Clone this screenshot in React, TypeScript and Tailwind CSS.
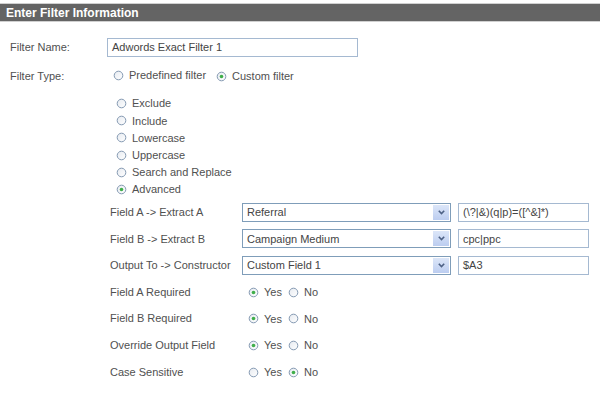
import { ReactNode } from "react";

const font = { fontFamily: '"Liberation Sans", Arial, sans-serif' };

function Radio({ checked, label }: { checked?: boolean; label: string }) {
  return (
    <span className="inline-flex items-center">
      <svg width="11" height="11" viewBox="0 0 11 11" className="mr-[5px] shrink-0">
        <defs>
          <linearGradient id="rg" x1="0" y1="0" x2="1" y2="1">
            <stop offset="0" stopColor="#e6eaf0" />
            <stop offset="1" stopColor="#ffffff" />
          </linearGradient>
        </defs>
        <circle cx="5.5" cy="5.5" r="4.3" fill="url(#rg)" stroke="#8499b2" strokeWidth="1" />
        {checked && <circle cx="5.5" cy="5.5" r="1.8" fill="#3fae49" />}
      </svg>
      <span>{label}</span>
    </span>
  );
}

function Select({ value }: { value: string }) {
  return (
    <div className="flex h-[19px] w-[209px] items-center border border-[#7f9db9] bg-white p-[1px]">
      <span className="flex-1 pl-[3px] text-[#444]">{value}</span>
      <span className="flex h-full w-[16px] items-center justify-center bg-gradient-to-b from-[#dce6f8] to-[#bccdf0]">
        <svg width="7" height="5" viewBox="0 0 7 5">
          <path d="M0.8 0.8 L3.5 3.6 L6.2 0.8" fill="none" stroke="#4d6185" strokeWidth="1.6" />
        </svg>
      </span>
    </div>
  );
}

function TextBox({ value, width }: { value: string; width: string }) {
  return (
    <div className={`flex h-[19px] items-center border border-[#a5b9d1] bg-white pl-[4px] text-[#444] ${width}`}>
      {value}
    </div>
  );
}

function Row({ label, h, children }: { label: string; h: string; children: ReactNode }) {
  return (
    <div className={`flex items-center pl-[110px] ${h}`}>
      <span className="w-[132px] shrink-0">{label}</span>
      {children}
    </div>
  );
}

const filterKinds = [
  { label: "Exclude" },
  { label: "Include" },
  { label: "Lowercase" },
  { label: "Uppercase" },
  { label: "Search and Replace" },
  { label: "Advanced", checked: true },
];

const fields = [
  { label: "Field A -> Extract A", select: "Referral", text: "(\\?|&)(q|p)=([^&]*)" },
  { label: "Field B -> Extract B", select: "Campaign Medium", text: "cpc|ppc" },
  { label: "Output To -> Constructor", select: "Custom Field 1", text: "$A3" },
];

const toggles = [
  { label: "Field A Required", yes: true },
  { label: "Field B Required", yes: true },
  { label: "Override Output Field", yes: true },
  { label: "Case Sensitive", yes: false },
];

export default function App() {
  return (
    <div className="h-[393px] w-[600px] overflow-hidden bg-white text-[11px] text-[#505050]" style={font}>
      <div className="mt-[3px] border-y border-[#d0d0d0] bg-[#646464]">
        <div className="flex h-[17px] items-center pl-[6px] text-[12px] font-bold text-white">
          Enter Filter Information
        </div>
      </div>

      <div className="mt-[16px] flex h-[19px] items-center pl-[10px]">
        <span className="w-[97px] shrink-0">Filter Name:</span>
        <TextBox value="Adwords Exact Filter 1" width="w-[251px]" />
      </div>

      <div className="mt-[10px] flex h-[19px] items-center pl-[10px]">
        <span className="w-[103px] shrink-0">Filter Type:</span>
        <span className="mr-[10px]">
          <Radio label="Predefined filter" />
        </span>
        <Radio checked label="Custom filter" />
      </div>

      <div className="mt-[9px] flex flex-col pl-[116px]">
        {filterKinds.map((k) => (
          <div key={k.label} className="flex h-[17.2px] items-center">
            <Radio checked={k.checked} label={k.label} />
          </div>
        ))}
      </div>

      <div className="mt-[1px]">
        {fields.map((f) => (
          <Row key={f.label} label={f.label} h="h-[26.5px]">
            <Select value={f.select} />
            <span className="ml-[7px]">
              <TextBox value={f.text} width="w-[131px]" />
            </span>
          </Row>
        ))}
        {toggles.map((t) => (
          <Row key={t.label} label={t.label} h="h-[26.7px]">
            <span className="ml-[6px] mr-[6px] pt-[2px]">
              <Radio checked={t.yes} label="Yes" />
            </span>
            <span className="pt-[2px]">
              <Radio checked={!t.yes} label="No" />
            </span>
          </Row>
        ))}
      </div>
    </div>
  );
}
